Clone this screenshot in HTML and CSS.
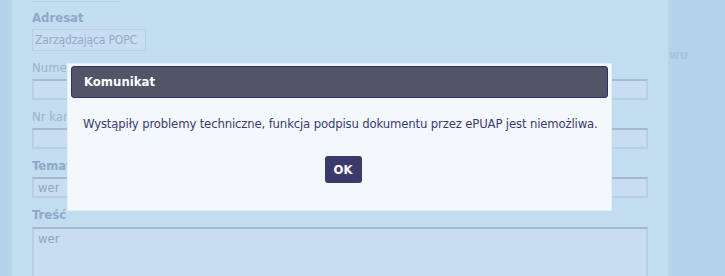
FILE: index.html
```html
<!DOCTYPE html>
<html lang="pl">
<head>
<meta charset="utf-8">
<title>Komunikat</title>
<link rel="stylesheet" href="styles.css">
</head>
<body>
<div class="page">
  <div class="strip-left"></div>
  <div class="main">
    <div class="frag"></div>
    <div class="label">Adresat</div>
    <div class="input short">Zarządzająca POPC</div>
    <div class="label light">Numer</div>
    <div class="input"></div>
    <div class="label light">Nr kar</div>
    <div class="input"></div>
    <div class="label">Temat</div>
    <div class="input">wer</div>
    <div class="label">Treść</div>
    <div class="input area">wer</div>
  </div>
  <div class="strip-right"><span class="wu">wu</span></div>
</div>
<div class="dialog">
  <div class="dialog-head">Komunikat</div>
  <div class="dialog-body">Wystąpiły problemy techniczne, funkcja podpisu dokumentu przez ePUAP jest niemożliwa.</div>
  <div class="dialog-foot"><button class="ok">OK</button></div>
</div>
</body>
</html>
```
FILE: styles.css
```css
html, body {
  margin: 0;
  padding: 0;
  height: 100%;
  overflow: hidden;
}
body {
  background: #b5d3ea;
  font-family: "DejaVu Sans Condensed", "DejaVu Sans", sans-serif;
}
.page {
  display: flex;
  height: 276px;
  overflow: hidden;
}
.strip-left {
  width: 12px;
  background: #b5d3ea;
}
.main {
  width: 656px;
  background: #c2ddef;
  padding-left: 20px;
  box-sizing: border-box;
  display: flex;
  flex-direction: column;
  align-items: flex-start;
}
.main > * {
  flex: none;
}
.strip-right {
  flex: 1;
  background: #b5d3ea;
}
.wu {
  display: block;
  margin-top: 47px;
  padding-left: 1px;
  font-size: 13px;
  font-weight: bold;
  color: #a6c3de;
}
.frag {
  width: 88px;
  height: 1px;
  background: #c7ddf0;
  border-bottom: 1px solid #b4cbe0;
}
.label {
  font-size: 13px;
  font-weight: bold;
  line-height: 16px;
  padding-top: 9px;
  padding-bottom: 3px;
  color: #8fa8c8;
  white-space: nowrap;
}
.frag + .label {
  padding-top: 8px;
}
.label.light {
  font-weight: normal;
  color: #9db3cf;
}
.input {
  width: 616px;
  height: 21px;
  box-sizing: border-box;
  background: #c8ddf1;
  border: 2px solid #b7cee3;
  border-top-color: #a5bacf;
  font-size: 13px;
  line-height: 17px;
  padding-left: 4px;
  color: #8ea6c3;
  white-space: nowrap;
}
.input.short {
  width: 114px;
  height: 22px;
  border: 1px solid #b7cee3;
  padding-left: 2px;
  font-size: 12px;
  letter-spacing: -0.15px;
  line-height: 20px;
  color: #93aac8;
}
.input.area {
  height: 70px;
  margin-top: 1px;
  line-height: 20px;
}
.dialog {
  position: absolute;
  left: 67px;
  top: 63px;
  width: 545px;
  height: 148px;
  box-sizing: border-box;
  background: #f3f8fd;
  border: 1px solid #e3eef8;
  padding: 2px 3px 0 3px;
}
.dialog-head {
  height: 32px;
  box-sizing: border-box;
  background: #525468;
  border: 1px solid #2e2f68;
  border-radius: 3px;
  color: #fff;
  font-size: 13px;
  font-weight: bold;
  line-height: 30px;
  padding-left: 12px;
}
.dialog-body {
  padding: 18px 0 0 12px;
  font-size: 13px;
  letter-spacing: -0.16px;
  line-height: 16px;
  color: #3c3b6e;
  white-space: nowrap;
}
.dialog-foot {
  display: flex;
  justify-content: center;
  padding-top: 24px;
  padding-left: 7px;
}
.ok {
  width: 37px;
  height: 27px;
  border: none;
  border-radius: 3px;
  background: #3b3b6b;
  color: #fff;
  font-family: "DejaVu Sans Condensed", "DejaVu Sans", sans-serif;
  font-size: 13px;
  font-weight: bold;
  padding: 0;
}
```
